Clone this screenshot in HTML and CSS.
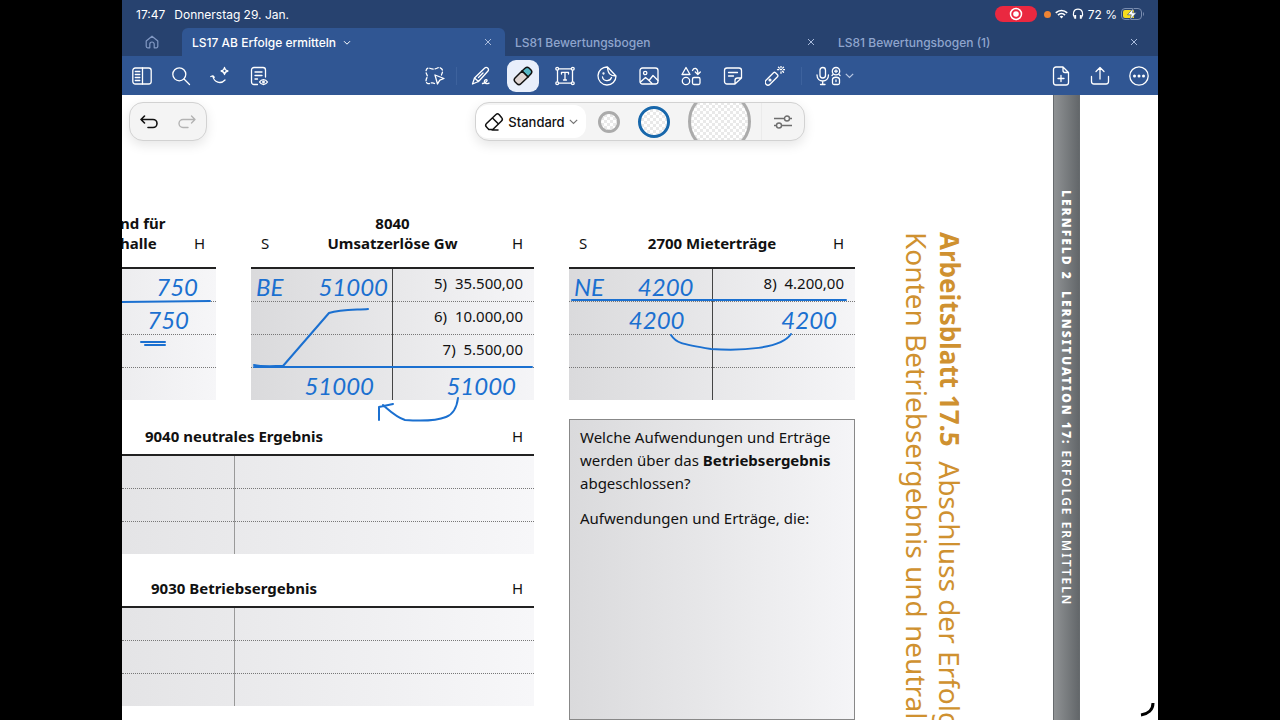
FILE: index.html
```html
<!DOCTYPE html>
<html lang="de">
<head>
  <meta charset="UTF-8">
  <meta name="viewport" content="width=device-width, initial-scale=1.0">
  <title>LS17 AB Erfolge ermitteln</title>
  <link rel="stylesheet" href="styles.css">
</head>
<body>
  <div class="screen">

    <!-- Status bar -->
    <header class="status">
      <span>17:47</span>
      <span>Donnerstag 29. Jan.</span>
      <div class="status-right">
        <span class="record">
          <svg width="14" height="14" viewBox="0 0 14 14"><circle cx="7" cy="7" r="5.5" fill="none" stroke="#fff" stroke-width="1.5"/><circle cx="7" cy="7" r="2.8" fill="#fff"/></svg>
        </span>
        <span class="dot"></span>
        <svg width="13" height="10" viewBox="0 0 13 10" fill="none" stroke="#fff" stroke-width="1.7"><path d="M.8 3.8a8.2 8.2 0 0 1 11.4 0M3 6.1a5 5 0 0 1 7 0"/><path d="M4.7 7.6a2.7 2.7 0 0 1 3.6 0L6.5 9.5z" fill="#fff" stroke="none"/></svg>
        <svg width="12" height="12" viewBox="0 0 12 12" fill="none" stroke="#fff" stroke-width="1.2"><path d="M2.5 9.5C.2 6 1.5 1.2 6 1.2S11.8 6 9.5 9.5"/><path d="M3.2 7v3.8M8.8 7v3.8" stroke-width="1.9"/></svg>
        <span>72 %</span>
        <svg width="24" height="12" viewBox="0 0 24 12"><rect x=".5" y=".5" width="20" height="11" rx="3.5" fill="none" stroke="#7a8db0"/><path d="M22 4v4c1.3-.5 1.3-3.5 0-4z" fill="#7a8db0"/><path d="M4 2h9v8H4a2 2 0 0 1-2-2V4a2 2 0 0 1 2-2z" fill="#f7dc1e"/><path d="M12.5 0L6.500 6.800h3.800L8.800 12l6.700-7.200h-4z" fill="#fff" stroke="#27426f" stroke-width=".6"/></svg>
      </div>
    </header>

    <!-- Document tabs -->
    <nav class="tabs">
      <button class="home" aria-label="Start">
        <svg width="14" height="14" viewBox="0 0 14 14" fill="none" stroke="#8299c4" stroke-width="1.2"><path d="M1.2 6L7 1.2 12.8 6v5.3a1.5 1.5 0 0 1-1.5 1.5H9.2V9.2a2.2 2.2 0 0 0-4.4 0v3.6H2.7a1.5 1.5 0 0 1-1.5-1.5z" stroke-linejoin="round"/></svg>
      </button>
      <div class="tab active">
        <a href="#">LS17 AB Erfolge ermitteln <svg width="8" height="6" viewBox="0 0 8 6" fill="none" stroke="currentColor"><path d="M1 1.2l3 3 3-3"/></svg></a>
        <button class="close" aria-label="Schließen"><svg width="8" height="8" viewBox="0 0 8 8" stroke="currentColor"><path d="M1 1l6 6M7 1L1 7"/></svg></button>
      </div>
      <div class="tab">
        <a href="#">LS81 Bewertungsbogen</a>
        <button class="close" aria-label="Schließen"><svg width="8" height="8" viewBox="0 0 8 8" stroke="currentColor"><path d="M1 1l6 6M7 1L1 7"/></svg></button>
      </div>
      <div class="tab">
        <a href="#">LS81 Bewertungsbogen (1)</a>
        <button class="close" aria-label="Schließen"><svg width="8" height="8" viewBox="0 0 8 8" stroke="currentColor"><path d="M1 1l6 6M7 1L1 7"/></svg></button>
      </div>
    </nav>

    <!-- Toolbar -->
    <div class="toolbar">
      <div class="tools">
        <button aria-label="Seitenleiste"><svg class="icon" viewBox="0 0 20 20"><rect x=".8" y="2" width="18.4" height="16" rx="2.5"/><path d="M10.500 2v16M3.300 5.500h4.500M3.300 8.500h4.500M3.300 11.500h4.500M3.300 14.500h4.500"/></svg></button>
        <button aria-label="Suchen"><svg class="icon" viewBox="0 0 20 20"><circle cx="8.3" cy="8.3" r="6.5"/><path d="M13 13l5.5 5.5"/></svg></button>
        <button aria-label="KI-Assistent"><svg class="icon" viewBox="0 0 20 20"><path d="M.8 10.500l2-.7 1.400 1.500M2.800 10c1.200 6.500 8 8.500 12.200 4"/><path d="M14.500 1.500c.4 2.400 1 3 3.400 3.500-2.400.5-3 1.100-3.400 3.500-.4-2.400-1-3-3.400-3.500 2.400-.5 3-1.100 3.400-3.500z"/></svg></button>
        <button aria-label="Dokumentansicht"><svg class="icon" viewBox="0 0 20 20"><path d="M8.500 18.500H5A2.500 2.500 0 0 1 2.500 16V4A2.500 2.500 0 0 1 5 1.500h9A2.500 2.500 0 0 1 16.500 4v7M6 6h7M6 9.500h7M6 13h2.500"/><path d="M10.500 16c2-3.300 6-3.300 8 0-2 3.300-6 3.300-8 0z"/><circle cx="14.500" cy="16" r=".8"/></svg></button>
      </div>
      <div class="tools">
        <button aria-label="Lasso"><svg class="icon" viewBox="0 0 20 20"><path d="M9.500 17.500c-3-2-5 1-7 0s-1.700-4-.5-6-1-3-1-6 2-4 4.500-3 5 .5 7-.5 5 0 5 3-1 2.500-1 4" stroke-dasharray="3.300 1.900"/><path d="M10 9l9 3.500-4.200 1.700L12.500 18z"/></svg></button>
        <span class="sep"></span>
        <button aria-label="Stift"><svg class="icon" viewBox="0 0 20 20"><path d="M1.500 18l2-6L13.500 2.200a2.200 2.200 0 0 1 3.300 3L7.500 15.500zM3.500 12l4 3.500M7.500 11.500l4.500-4.500M11.500 17.500c2.500-.5 5-2 4.500-3.300s-3-.2-2.600 1.700 2.600 2.300 4.600 1.200"/></svg></button>
        <button aria-label="Radierer"><span class="selected"><svg class="eraser" width="20" height="20" viewBox="0 0 20 20"><path d="M9 5l3.300-3a2.800 2.800 0 0 1 3.700 0l2 2a2.800 2.800 0 0 1 0 3.700L15 11z" fill="#55b6c4"/><path d="M9 5L2 12a2.800 2.800 0 0 0 0 3.700l2 2a2.800 2.800 0 0 0 3.900 0L15 11z" fill="#dfd5d3"/></svg></span></button>
        <button aria-label="Text"><svg class="icon" viewBox="0 0 20 20"><path d="M2.500 2.800h15v14.400h-15zM6.500 8V6.300h7V8M10 6.300v7.700M8.500 14h3"/><g fill="#305693"><circle cx="2.200" cy="2.800" r="1.400"/><circle cx="17.800" cy="2.800" r="1.400"/><circle cx="2.200" cy="17.200" r="1.400"/><circle cx="17.800" cy="17.200" r="1.400"/></g></svg></button>
        <button aria-label="Sticker"><svg class="icon" viewBox="0 0 20 20"><path d="M10.500 1a9 9 0 1 0 8.500 9zM10.500 1c.3 6.500 2.500 8.800 8.500 9M5.500 11c.7 4.500 7.500 5 9 .5"/><circle cx="6.500" cy="7.500" r=".5"/></svg></button>
        <button aria-label="Bild"><svg class="icon" viewBox="0 0 20 20"><rect x="1" y="2" width="18" height="16" rx="2.500"/><circle cx="6.200" cy="7" r="1.700"/><path d="M1.500 16l5-4.500 3.500 3 4-5 5 5M9 13.500l4 4"/></svg></button>
        <button aria-label="Formen"><svg class="icon" viewBox="0 0 20 20"><path d="M5 1.500l4 7H1z"/><circle cx="5" cy="15" r="3.700"/><rect x="11.500" y="11.500" width="7.500" height="7" rx="1.500"/><path d="M11.500 4.500c1.300-3 4.800-3 5.300 1.500V8M14.300 6l2.500 2.500L19.300 6"/></svg></button>
        <button aria-label="Notiz"><svg class="icon" viewBox="0 0 20 20"><path d="M12 18H4a2.500 2.500 0 0 1-2.500-2.500v-11A2.500 2.500 0 0 1 4 2h12a2.500 2.500 0 0 1 2.500 2.500V12zM12 18v-3.500a2.500 2.500 0 0 1 2.500-2.500h4M5.500 6.500h9M5.500 10h5"/></svg></button>
        <button aria-label="Laserpointer"><svg class="icon" viewBox="0 0 20 20"><path d="M1 14.200l7.500-7.500a1.500 1.500 0 0 1 2 0l2 2a1.500 1.500 0 0 1 0 2L5 18.200a2.800 2.800 0 0 1-4-4z"/><circle cx="5" cy="14" r=".9"/><path d="M15.500 3.500h1M16 .2v1.300M16 6v1.300M12.500 3.700h1.300M18.500 3.700h1.300M13.500 1.200l.9.900M18.500 1.200l-.9.900M18.500 6.200l-.9-.9"/></svg></button>
        <span class="sep wide"></span>
        <button class="mic" aria-label="Audio">
          <svg class="icon mic-icon" viewBox="0 0 26 20"><rect x="4" y="1.500" width="5.500" height="10.500" rx="2.700"/><path d="M1 9c0 8 11.500 8 11.500 0M6.700 15v3.500M4.500 18.500h4.500"/><circle cx="20" cy="5.200" r="3.700"/><path d="M20 3.800v2.800M18.600 5.200h2.800M17 8.500l-1 1M23 8.500l1 1M16.500 13.500c0-3 7-3 7 0V17a1.500 1.500 0 0 1-1.500 1.500h-4a1.500 1.500 0 0 1-1.500-1.500zM20 14v1.500"/></svg>
          <svg width="9" height="6" viewBox="0 0 9 6" fill="none" stroke="#b9c8e4" stroke-width="1.2"><path d="M.8.8l3.700 3.700L8.200.8"/></svg>
        </button>
      </div>
      <div class="tools end">
        <button aria-label="Seite hinzufügen"><svg class="icon" viewBox="0 0 20 20"><path d="M12 1H5a2.500 2.500 0 0 0-2.500 2.500v13A2.500 2.500 0 0 0 5 19h10a2.500 2.500 0 0 0 2.500-2.500v-10zM12 1v3.500a2 2 0 0 0 2 2h3.500M10 9.500v6M7 12.500h6"/></svg></button>
        <button aria-label="Teilen"><svg class="icon" viewBox="0 0 20 20"><path d="M1.500 10.500v5A2.500 2.500 0 0 0 4 18h12a2.500 2.500 0 0 0 2.500-2.500v-5M10 13V1.800M6 5.500l4-4 4 4"/></svg></button>
        <button aria-label="Mehr"><svg class="icon" viewBox="0 0 20 20"><circle cx="10" cy="10" r="9.200"/><g fill="#fff" stroke="none"><circle cx="5.500" cy="10" r="1.500"/><circle cx="10" cy="10" r="1.500"/><circle cx="14.500" cy="10" r="1.500"/></g></svg></button>
      </div>
    </div>

    <!-- Page -->
    <main class="page">
      <div class="accounts">
        <section class="account">
          <div class="head cut"><h2>nd für<br>halle</h2><span>H</span></div>
          <table class="light">
            <tr><td class="ink">750</td></tr>
            <tr><td class="ink far">750</td></tr>
            <tr><td></td></tr>
            <tr><td></td></tr>
          </table>
        </section>

        <section class="account">
          <div class="head"><span>S</span><h2>8040<br>Umsatzerlöse Gw</h2><span>H</span></div>
          <table class="split">
            <tr><td class="ink near"><span class="mark">BE</span>51000</td><td>5)&nbsp; 35.500,00</td></tr>
            <tr><td></td><td>6)&nbsp; 10.000,00</td></tr>
            <tr><td></td><td>7)&nbsp; 5.500,00</td></tr>
            <tr><td class="ink">51000</td><td class="ink">51000</td></tr>
          </table>
        </section>

        <section class="account">
          <div class="head"><span>S</span><h2>2700 Mieterträge</h2><span>H</span></div>
          <table class="split">
            <tr><td class="ink"><span class="mark">NE</span>4200</td><td>8)&nbsp; 4.200,00</td></tr>
            <tr><td class="ink far">4200</td><td class="ink">4200</td></tr>
            <tr><td></td><td></td></tr>
            <tr><td></td><td></td></tr>
          </table>
        </section>

        <div class="results">
          <section class="account">
            <div class="head result"><h2>9040 neutrales Ergebnis</h2><span>H</span></div>
            <table class="wide-table">
              <tr><td></td><td></td></tr>
              <tr><td></td><td></td></tr>
              <tr><td></td><td></td></tr>
            </table>
          </section>
          <section class="account">
            <div class="head result"><h2>9030 Betriebsergebnis</h2><span>H</span></div>
            <table class="wide-table">
              <tr><td></td><td></td></tr>
              <tr><td></td><td></td></tr>
              <tr><td></td><td></td></tr>
            </table>
          </section>
        </div>

        <section class="question">
          <p>Welche Aufwendungen und Erträge<br>werden über das <b>Betriebsergebnis</b><br>abgeschlossen?</p>
          <p>Aufwendungen und Erträge, die:</p>
        </section>
      </div>

      <h1><b>Arbeitsblatt 17.5</b>&nbsp; Abschluss der Erfolg<br>Konten Betriebsergebnis und neutral</h1>
      <div class="spine"><b>LERNFELD 2&nbsp; LERNSITUATION 17:</b> ERFOLGE ERMITTELN</div>

      <!-- Pen lines over the page -->
      <svg class="pen" width="1036" height="625" viewBox="0 0 1036 625">
        <path d="M0 207L88 206M19 247h24M23 250h20"/>
        <path d="M132 270c8 2 20 1 29 1l46-53c12-4 28-3 39-4M132 272h278"/>
        <path d="M336 303c-1 8-4 16-12 19-10 4-27 4-41 3-9-3-15-9-22-15M257 325v-13l14-3"/>
        <path d="M450 205h274M549 240c5 8 10 9 40 14 30 2 70 0 80-15"/>
      </svg>

      <div class="panel history">
        <button aria-label="Rückgängig"><svg width="18" height="14" viewBox="0 0 18 14" fill="none" stroke="#111" stroke-width="1.6" stroke-linecap="round" stroke-linejoin="round"><path d="M4.500 1L1 4.500 4.500 8M1 4.500h12a4 4 0 0 1 0 8H8"/></svg></button>
        <button aria-label="Wiederholen"><svg width="18" height="14" viewBox="0 0 18 14" fill="none" stroke="#b3b3b3" stroke-width="1.4" stroke-linecap="round" stroke-linejoin="round"><path d="M13.500 1L17 4.500 13.500 8M17 4.500H5a4 4 0 0 0 0 8h5"/></svg></button>
      </div>

      <div class="panel options">
        <button class="mode">
          <svg class="eraser" width="20" height="20" viewBox="0 0 20 20"><path d="M12 2.500L2.500 11.500a2.500 2.500 0 0 0 0 3.500l2.300 2.500h4L17.500 9a2.500 2.500 0 0 0 0-3.500l-2.500-3a2.200 2.200 0 0 0-3 0zM8.500 6l6 6M8 18h6"/></svg>
          Standard
          <svg width="9" height="6" viewBox="0 0 9 6" fill="none" stroke="#777" stroke-width="1.2"><path d="M.8.8l3.700 3.700L8.200.8"/></svg>
        </button>
        <div class="sizes">
          <input type="radio" name="size" class="small" aria-label="Klein">
          <input type="radio" name="size" class="medium" aria-label="Mittel" checked>
          <input type="radio" name="size" class="large" aria-label="Groß">
        </div>
        <button class="settings" aria-label="Einstellungen"><svg width="18" height="14" viewBox="0 0 18 14" fill="none" stroke="#6e6e6e" stroke-width="1.4"><circle cx="13" cy="3.500" r="2.500"/><circle cx="5" cy="10.500" r="2.500"/><path d="M0 3.500h10.500M15.500 3.500H18M0 10.500h2.500M7.500 10.500H18"/></svg></button>
      </div>

      <svg class="corner" width="16" height="16" viewBox="0 0 16 16" fill="none" stroke="#000" stroke-width="3"><path d="M14 2c0 7-5 11-12 12"/></svg>
    </main>
  </div>
</body>
</html>
```
FILE: styles.css
```css
* {
  box-sizing: border-box;
}
body {
  margin: 0;
  padding: 0 122px;
  background-color: #000;
  font-family: Inter, "Liberation Sans", sans-serif;
}
button {
  padding: 0;
  border: none;
  background: none;
  font: inherit;
  color: inherit;
  cursor: pointer;
}
.screen {
  display: flex;
  flex-direction: column;
  height: 100vh;
  overflow: hidden;
  background-color: #fff;
}

/* status bar */
.status {
  display: flex;
  align-items: center;
  gap: 9px;
  height: 28px;
  padding: 0 13px 0 14px;
  background-color: #27426f;
  color: #fff;
  font-size: 12px;
}
.status-right {
  display: flex;
  align-items: center;
  gap: 4px;
  margin-left: auto;
}
.record {
  display: flex;
  align-items: center;
  justify-content: center;
  width: 42px;
  height: 16px;
  margin-right: 3px;
  border-radius: 8px;
  background-color: #ea2840;
}
.dot {
  width: 7px;
  height: 7px;
  border-radius: 50%;
  background-color: #ee8434;
}

/* tabs */
.tabs {
  display: grid;
  grid-template-columns: 60px 1fr 1fr 1fr;
  height: 28px;
  padding-right: 7px;
  background-color: #27426f;
  color: #8fa5cd;
  font-size: 12px;
  font-weight: 500;
}
.home {
  display: flex;
  align-items: center;
  justify-content: center;
}
.tab {
  display: flex;
  align-items: center;
  justify-content: space-between;
  padding: 0 13px 0 10px;
}
.tab a {
  color: inherit;
  text-decoration: none;
}
.tab a svg {
  margin: 0 0 1px 4px;
}
.tab.active {
  border-radius: 6px 6px 0 0;
  background-color: #305693;
  color: #fff;
}
.close {
  display: flex;
  color: #a9bbdc;
}

/* toolbar */
.toolbar {
  display: grid;
  grid-template-columns: 1fr auto 1fr;
  height: 39px;
  background-color: #305693;
}
.tools {
  display: flex;
  align-items: center;
}
.tools button {
  display: flex;
  align-items: center;
  justify-content: center;
  width: 42px;
  height: 39px;
}
.tools:first-child button,
.tools.end button {
  width: 39px;
}
.tools.end {
  justify-content: flex-end;
}
.icon {
  width: 20px;
  height: 20px;
  fill: none;
  stroke: #fff;
  stroke-width: 1.3;
  stroke-linecap: round;
  stroke-linejoin: round;
}
.sep {
  width: 4px;
  height: 18px;
  border-left: 1px solid #3d629d;
}
.sep.wide {
  width: 7px;
  margin-left: 5px;
}
.tools .mic {
  gap: 3px;
  width: 58px;
  padding-right: 4px;
}
.mic-icon {
  width: 26px;
}
.selected {
  display: flex;
  align-items: center;
  justify-content: center;
  width: 32px;
  height: 32px;
  border-radius: 9px;
  background-color: #e9effb;
}
.eraser {
  fill: none;
  stroke: #111;
  stroke-width: 1.5;
  stroke-linecap: round;
  stroke-linejoin: round;
}

/* page */
.page {
  position: relative;
  display: flex;
  flex: 1;
  min-height: 0;
  overflow: hidden;
  color: #111;
  font-family: "Noto Sans", "Open Sans", sans-serif;
  font-size: 15px;
}
.accounts {
  display: grid;
  grid-template-columns: 94fr 283fr 286fr;
  grid-template-rows: auto 1fr;
  gap: 19px 35px;
  flex: 1;
  padding-top: 119px;
}
.head {
  display: flex;
  align-items: flex-end;
  justify-content: space-between;
  height: 53px;
  padding: 0 10px 14px;
  line-height: 20px;
}
.head span {
  width: 12px;
}
h2 {
  margin: 0;
  font-size: 15px;
  font-weight: 700;
  line-height: 20px;
  text-align: center;
}
.head.cut h2 {
  margin-left: -12px;
  text-align: left;
}
.head.result {
  height: 35px;
  padding-bottom: 8px;
}
.head.result h2 {
  width: 224px;
  margin-left: -10px;
}
table {
  width: 100%;
  border-collapse: collapse;
  table-layout: fixed;
  border-top: 2px solid #222;
  background: linear-gradient(to right, #dadadc, #f5f5f7);
}
td {
  height: 33px;
  padding: 0 11px 3px 0;
  border-bottom: 1px dotted #777;
  line-height: 20px;
  text-align: right;
}
tr:last-child td {
  border-bottom: none;
}
.split td:first-child {
  border-right: 1px solid #444;
}
.light {
  background: linear-gradient(to right, #ededef, #f6f6f8);
}
.wide-table {
  background: linear-gradient(to right, #e4e4e6, #f7f7f9);
}
.wide-table td:first-child {
  width: 112px;
  border-right: 1px solid #999;
}
.ink {
  padding: 4px 18px 0 0;
  color: #1b70d0;
  font-family: Lato, sans-serif;
  font-size: 24px;
  font-style: italic;
}
.ink.near {
  padding-right: 4px;
}
.ink.far {
  padding-right: 27px;
}
.mark {
  float: left;
  padding-left: 5px;
}
.results {
  display: flex;
  flex-direction: column;
  gap: 17px;
  grid-column: span 2;
}
.question {
  padding: 6px 10px;
  border: 1px solid #888;
  background: linear-gradient(to right, #dadadc, #f5f5f7);
}
.question p {
  margin: 0 0 12px;
  line-height: 23px;
  white-space: nowrap;
}
h1 {
  width: 111px;
  margin: 0;
  padding-top: 137px;
  color: #cf9130;
  font-size: 28px;
  font-weight: 400;
  line-height: 33px;
  white-space: nowrap;
  writing-mode: vertical-rl;
}
h1 b {
  font-size: 26px;
}
.spine {
  width: 27px;
  margin: 0 78px 0 87px;
  padding-top: 95px;
  border: 1px solid #666a6d;
  border-width: 0 1px;
  background: linear-gradient(to right, #8f9294, #63676a);
  color: #fff;
  font-size: 12px;
  font-weight: 600;
  line-height: 25px;
  letter-spacing: 2px;
  white-space: nowrap;
  writing-mode: vertical-rl;
}

/* everything that floats over the page */
.pen {
  position: absolute;
  top: 0;
  left: 0;
  fill: none;
  stroke: #1b70d0;
  stroke-width: 2;
  stroke-linecap: round;
  stroke-linejoin: round;
  pointer-events: none;
}
.panel {
  position: absolute;
  top: 7px;
  display: flex;
  height: 39px;
  border: 1px solid #d2d2d2;
  border-radius: 14px;
  background-color: #f4f4f4;
  box-shadow: 0 4px 12px rgba(0, 0, 0, 0.1);
  overflow: hidden;
}
.panel button {
  display: flex;
  align-items: center;
  justify-content: center;
}
.history {
  left: 7px;
  width: 78px;
}
.history button {
  flex: 1;
}
.options {
  left: 50%;
  width: 330px;
  transform: translateX(-50%);
  font-family: Inter, sans-serif;
}
.options .mode {
  gap: 4px;
  width: 110px;
  margin: 2px 0;
  border-radius: 12px;
  background-color: #fff;
  color: #111;
  font-size: 13px;
  font-weight: 500;
}
.sizes {
  display: flex;
  align-items: center;
  gap: 18px;
  padding-left: 12px;
}
.sizes input {
  flex: none;
  margin: 0;
  appearance: none;
  border: 3px solid #ababab;
  border-radius: 50%;
  background: repeating-conic-gradient(#e9e9e9 0 25%, #fff 0 50%) 0 0 / 6px 6px;
}
.sizes input:checked {
  border-color: #1767ab;
}
.small {
  width: 22px;
  height: 22px;
}
.medium {
  width: 32px;
  height: 32px;
}
.large {
  width: 63px;
  height: 63px;
}
.settings {
  flex: 1;
  margin-left: 10px;
  border-left: 1px solid #ebebeb;
}
.corner {
  position: absolute;
  right: 3px;
  bottom: 3px;
}
```
